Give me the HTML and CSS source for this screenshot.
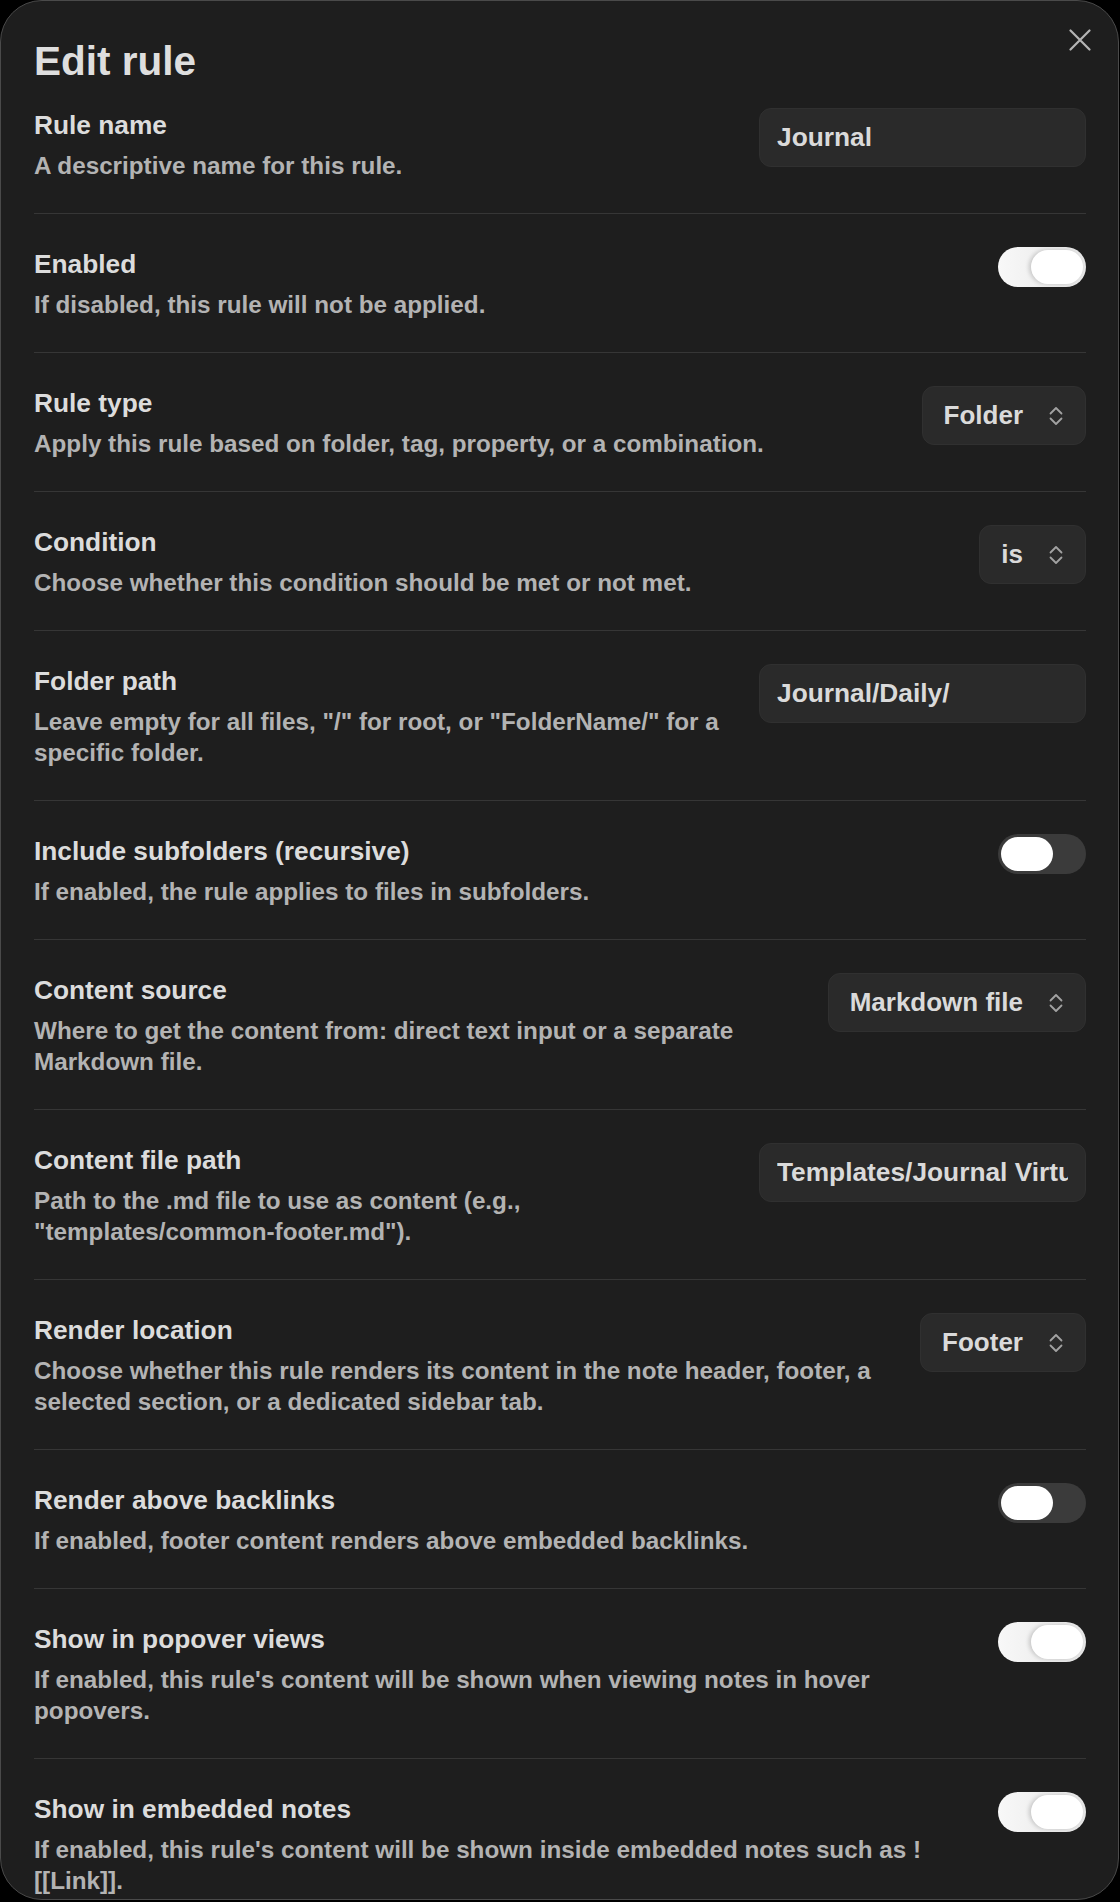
FILE: index.html
```html
<!DOCTYPE html>
<html lang="en">
<head>
<meta charset="utf-8">
<title>Edit rule</title>
<link rel="stylesheet" href="styles.css">
</head>
<body>
<div class="modal">
  <button class="close" aria-label="Close">
    <svg viewBox="0 0 22 22" width="22" height="22"><path d="M1.5 1.5 L20.5 20.5 M20.5 1.5 L1.5 20.5" fill="none" stroke="currentColor" stroke-width="2.2" stroke-linecap="round"/></svg>
  </button>
  <h1 class="title">Edit rule</h1>
  <div class="settings">
    <div class="setting">
      <div class="info"><div class="name">Rule name</div><div class="desc">A descriptive name for this rule.</div></div>
      <div class="control"><input class="text-input" type="text" value="Journal"></div>
    </div>
    <div class="setting">
      <div class="info"><div class="name">Enabled</div><div class="desc">If disabled, this rule will not be applied.</div></div>
      <div class="control"><div class="toggle on"><span class="knob"></span></div></div>
    </div>
    <div class="setting">
      <div class="info"><div class="name">Rule type</div><div class="desc">Apply this rule based on folder, tag, property, or a combination.</div></div>
      <div class="control"><div class="select"><span>Folder</span><svg class="chev" viewBox="0 0 16 20" width="16" height="20"><path d="M2.5 7.5 L8 2 L13.5 7.5 M2.5 12.5 L8 18 L13.5 12.5" fill="none" stroke="currentColor" stroke-width="1.8" stroke-linecap="round" stroke-linejoin="round"/></svg></div></div>
    </div>
    <div class="setting">
      <div class="info"><div class="name">Condition</div><div class="desc">Choose whether this condition should be met or not met.</div></div>
      <div class="control"><div class="select"><span>is</span><svg class="chev" viewBox="0 0 16 20" width="16" height="20"><path d="M2.5 7.5 L8 2 L13.5 7.5 M2.5 12.5 L8 18 L13.5 12.5" fill="none" stroke="currentColor" stroke-width="1.8" stroke-linecap="round" stroke-linejoin="round"/></svg></div></div>
    </div>
    <div class="setting">
      <div class="info"><div class="name">Folder path</div><div class="desc">Leave empty for all files, "/" for root, or "FolderName/" for a specific folder.</div></div>
      <div class="control"><input class="text-input" type="text" value="Journal/Daily/"></div>
    </div>
    <div class="setting">
      <div class="info"><div class="name">Include subfolders (recursive)</div><div class="desc">If enabled, the rule applies to files in subfolders.</div></div>
      <div class="control"><div class="toggle"><span class="knob"></span></div></div>
    </div>
    <div class="setting">
      <div class="info"><div class="name">Content source</div><div class="desc">Where to get the content from: direct text input or a separate Markdown file.</div></div>
      <div class="control"><div class="select"><span>Markdown file</span><svg class="chev" viewBox="0 0 16 20" width="16" height="20"><path d="M2.5 7.5 L8 2 L13.5 7.5 M2.5 12.5 L8 18 L13.5 12.5" fill="none" stroke="currentColor" stroke-width="1.8" stroke-linecap="round" stroke-linejoin="round"/></svg></div></div>
    </div>
    <div class="setting">
      <div class="info"><div class="name">Content file path</div><div class="desc">Path to the .md file to use as content (e.g., <span class="nowrap">"templates/common-footer.md").</span></div></div>
      <div class="control"><input class="text-input" type="text" value="Templates/Journal Virtual Footer.md"></div>
    </div>
    <div class="setting">
      <div class="info"><div class="name">Render location</div><div class="desc">Choose whether this rule renders its content in the note header, footer, a selected section, or a dedicated sidebar tab.</div></div>
      <div class="control"><div class="select"><span>Footer</span><svg class="chev" viewBox="0 0 16 20" width="16" height="20"><path d="M2.5 7.5 L8 2 L13.5 7.5 M2.5 12.5 L8 18 L13.5 12.5" fill="none" stroke="currentColor" stroke-width="1.8" stroke-linecap="round" stroke-linejoin="round"/></svg></div></div>
    </div>
    <div class="setting">
      <div class="info"><div class="name">Render above backlinks</div><div class="desc">If enabled, footer content renders above embedded backlinks.</div></div>
      <div class="control"><div class="toggle"><span class="knob"></span></div></div>
    </div>
    <div class="setting">
      <div class="info"><div class="name">Show in popover views</div><div class="desc">If enabled, this rule's content will be shown when viewing notes in hover popovers.</div></div>
      <div class="control"><div class="toggle on"><span class="knob"></span></div></div>
    </div>
    <div class="setting">
      <div class="info"><div class="name">Show in embedded notes</div><div class="desc">If enabled, this rule's content will be shown inside embedded notes such as !<wbr>[[Link]].</div></div>
      <div class="control"><div class="toggle on"><span class="knob"></span></div></div>
    </div>
  </div>
</div>
</body>
</html>
```
FILE: styles.css
```css
* {
  box-sizing: border-box;
}

html,
body {
  margin: 0;
  background: #000;
}

body {
  font-family: "Liberation Sans", Arial, sans-serif;
  font-weight: 700;
  color: #dadada;
}

.modal {
  position: relative;
  width: 1119px;
  height: 1900px;
  overflow: hidden;
  background: #1e1e1e;
  border: 1px solid #4a4a4a;
  border-radius: 42px;
  padding: 36px 32px 0 33px;
}

.close {
  position: absolute;
  top: 28px;
  right: 27px;
  width: 22px;
  height: 22px;
  padding: 0;
  border: 0;
  background: none;
  color: #b4b4b4;
  display: flex;
}

.title {
  margin: 0 0 23px;
  font-size: 40.5px;
  line-height: 48px;
  font-weight: 700;
  color: #dedede;
}

.setting {
  display: flex;
  align-items: flex-start;
  padding: 33px 0 32px;
  border-top: 1px solid #363636;
}

.setting:first-child {
  padding-top: 0;
  border-top: 0;
}

.info {
  flex: 1 1 auto;
  min-width: 0;
  padding-right: 24px;
}

.name {
  font-size: 26.3px;
  line-height: 34px;
  color: #dcdcdc;
}

.desc {
  margin-top: 8px;
  font-size: 24.25px;
  line-height: 31px;
  color: #b3b3b3;
}

.nowrap {
  white-space: nowrap;
}

.control {
  flex: 0 0 auto;
  display: flex;
  justify-content: flex-end;
}

.text-input {
  width: 327px;
  height: 59px;
  padding: 0 17px;
  font-family: inherit;
  font-size: 26.3px;
  font-weight: 700;
  color: #dadada;
  background: #2a2a2a;
  border: 1px solid #303030;
  border-radius: 12px;
  outline: none;
}

.select {
  display: flex;
  align-items: center;
  gap: 25px;
  height: 59px;
  padding: 0 21px;
  font-size: 26px;
  color: #dadada;
  background: #2a2a2a;
  border: 1px solid #303030;
  border-radius: 12px;
}

.chev {
  color: #a2a2a2;
  flex: 0 0 auto;
}

.toggle {
  display: flex;
  justify-content: flex-start;
  width: 88px;
  height: 40px;
  padding: 3px;
  border-radius: 20px;
  background: #3b3b3b;
}

.knob {
  width: 52px;
  height: 34px;
  border-radius: 17px;
  background: #fff;
}

.toggle.on {
  justify-content: flex-end;
  background: linear-gradient(90deg, #f8f8f8, #e6e6e6);
}

.toggle.on .knob {
  box-shadow: -2px 0 4px rgba(0, 0, 0, 0.18);
}
```
